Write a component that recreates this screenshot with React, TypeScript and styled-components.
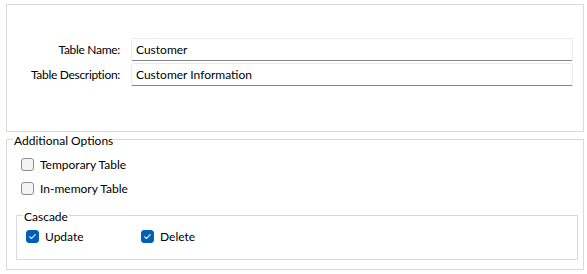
import React, { FC } from 'react';
import styled, { createGlobalStyle } from 'styled-components';

const GlobalStyle = createGlobalStyle`
  html, body {
    margin: 0;
    padding: 0;
    background: #ffffff;
  }
  body {
    font-family: 'Segoe UI', Lato, 'Liberation Sans', sans-serif;
    font-size: 12px;
    color: #000000;
  }
`;

const Page = styled.div`
  width: 587px;
  height: 274px;
  box-sizing: border-box;
  padding: 4px 3px 0 6px;
  display: flex;
  flex-direction: column;
`;

const TablePanel = styled.div`
  height: 128px;
  box-sizing: border-box;
  border: 1px solid #dadada;
  padding: 33px 10px 0 0;
  display: grid;
  grid-template-columns: 113px 1fr;
  column-gap: 11px;
  row-gap: 2px;
  align-content: start;
`;

const FieldLabel = styled.label`
  text-align: right;
  line-height: 23px;
  white-space: nowrap;
  letter-spacing: -0.3px;
`;

const TextInput = styled.input`
  height: 23px;
  box-sizing: border-box;
  border: 1px solid #ebebeb;
  border-bottom: 1px solid #868686;
  border-radius: 2px;
  padding: 0 4px 1px;
  font: inherit;
  color: #000000;
  background: #ffffff;
  outline: none;
`;

const Group = styled.fieldset`
  margin: 0;
  border: 1px solid #dadada;
  min-width: 0;
  box-sizing: border-box;
  display: flex;
`;

const Legend = styled.legend`
  padding: 4px 1px 0;
  margin-left: -3px;
  line-height: 10px;
`;

const OptionsGroup = styled(Group)`
  height: 138px;
  padding: 12px 5px 0 9px;
  flex-direction: column;
`;

const OptionList = styled.div`
  display: flex;
  flex-direction: column;
  gap: 11px;
  padding-left: 5px;
  margin-bottom: 13px;
`;

const CascadeGroup = styled(Group)`
  height: 52px;
  padding: 8px 0 0 9px;
  flex-direction: row;
`;

const CheckRow = styled.label<{ $width?: number }>`
  display: flex;
  align-items: center;
  gap: 6px;
  height: 13px;
  width: ${(p) => (p.$width ? `${p.$width}px` : 'auto')};
  white-space: nowrap;
`;

const Box = styled.span<{ $checked: boolean }>`
  width: 13px;
  height: 13px;
  box-sizing: border-box;
  border-radius: 3px;
  border: 1px solid ${(p) => (p.$checked ? '#005fb8' : '#8d8d8d')};
  background: ${(p) => (p.$checked ? '#005fb8' : '#f4f4f4')};
  display: flex;
  align-items: center;
  justify-content: center;
  flex-shrink: 0;
`;

interface CheckProps {
  label: string;
  checked?: boolean;
  width?: number;
}

const Check: FC<CheckProps> = ({ label, checked = false, width }) => (
  <CheckRow $width={width}>
    <Box $checked={checked}>
      {checked && (
        <svg width="9" height="9" viewBox="0 0 9 9">
          <polyline points="1.8,4.8 3.6,6.5 7.2,2.6" fill="none" stroke="#ffffff" strokeWidth="1.1" strokeLinecap="round" strokeLinejoin="round" />
        </svg>
      )}
    </Box>
    <span>{label}</span>
  </CheckRow>
);

const App: FC = () => (
  <>
    <GlobalStyle />
    <Page>
      <TablePanel>
        <FieldLabel>Table Name:</FieldLabel>
        <TextInput defaultValue="Customer" />
        <FieldLabel>Table Description:</FieldLabel>
        <TextInput defaultValue="Customer Information" />
      </TablePanel>
      <OptionsGroup>
        <Legend>Additional Options</Legend>
        <OptionList>
          <Check label="Temporary Table" />
          <Check label="In-memory Table" />
        </OptionList>
        <CascadeGroup>
          <Legend>Cascade</Legend>
          <Check label="Update" checked width={115} />
          <Check label="Delete" checked />
        </CascadeGroup>
      </OptionsGroup>
    </Page>
  </>
);

export default App;
